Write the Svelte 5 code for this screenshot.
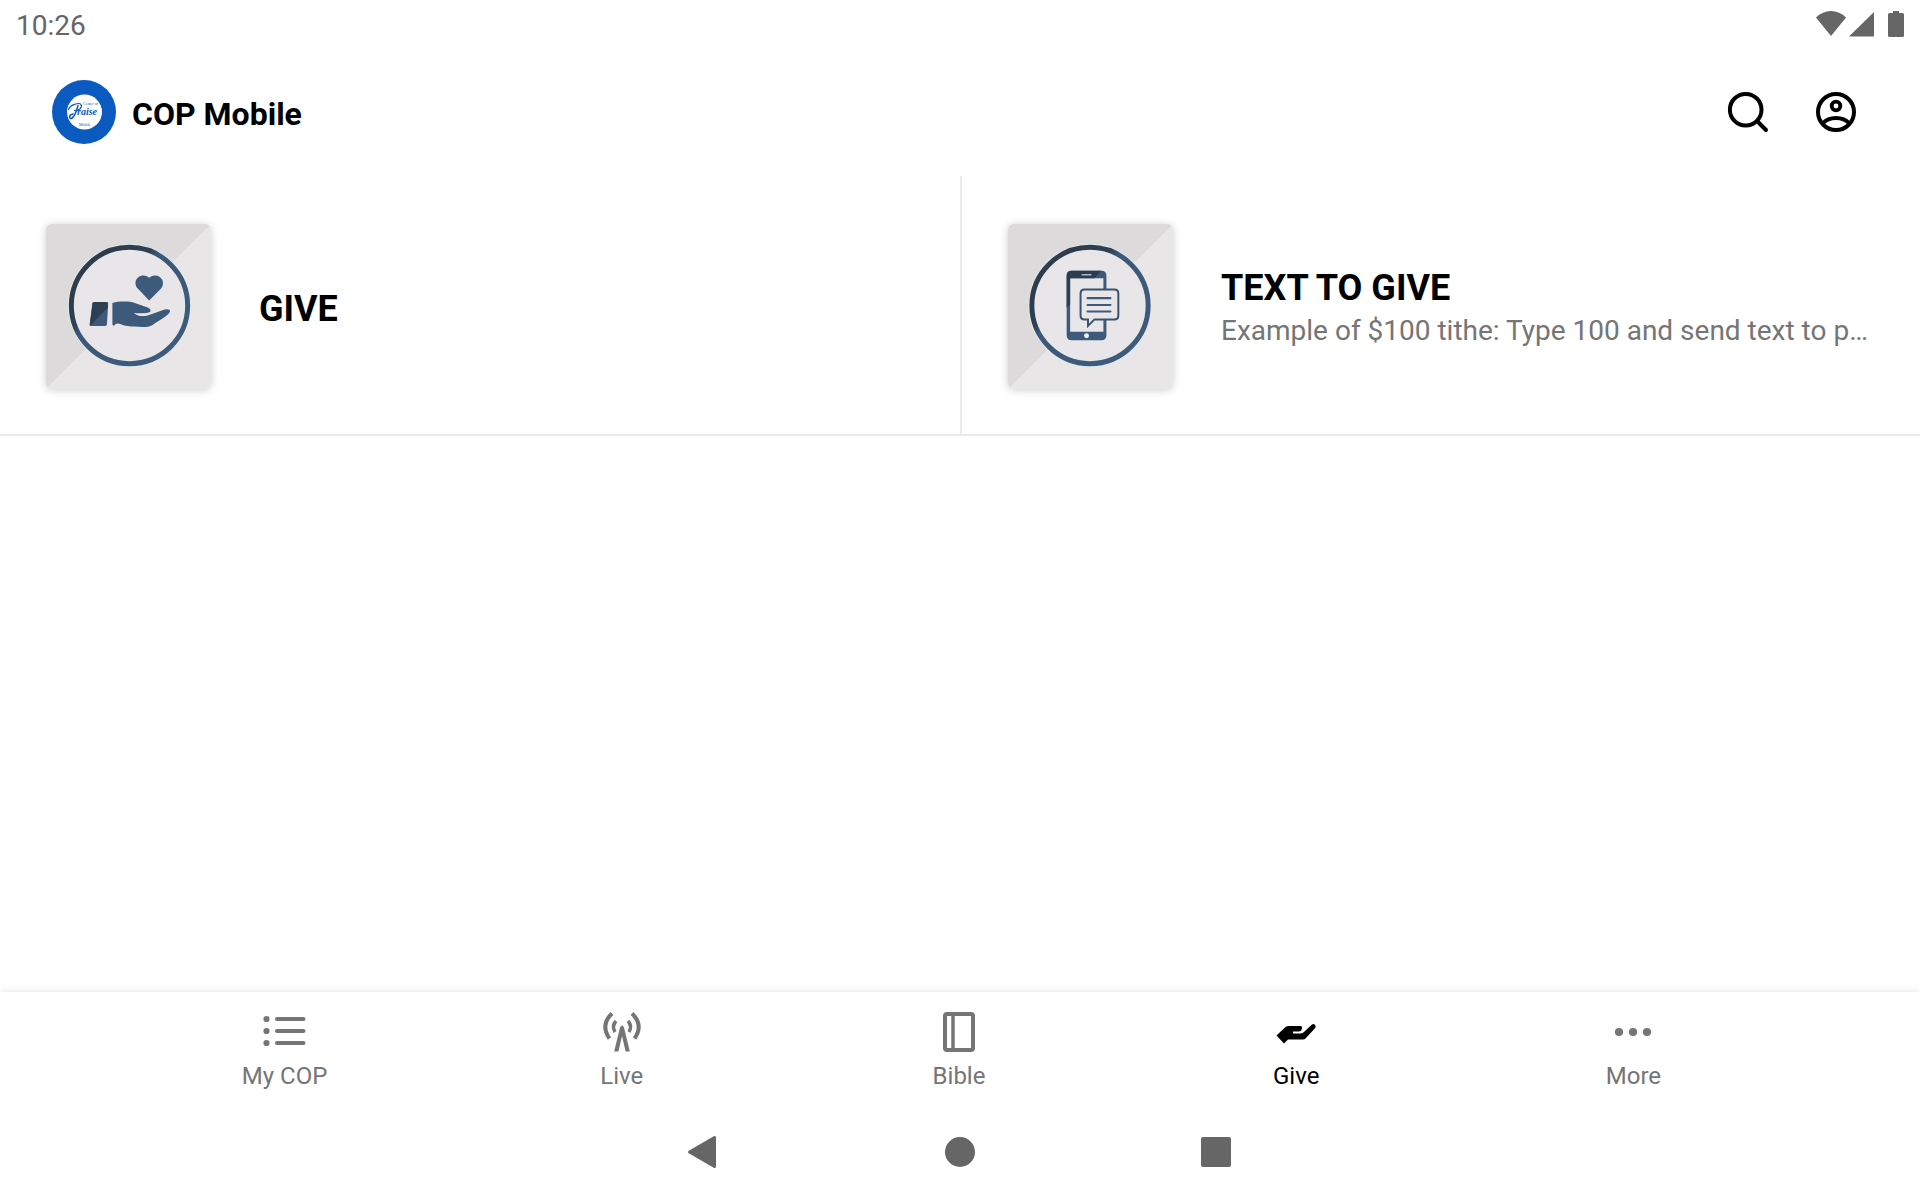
<script>
  const tabs = [
    { id: 'my', label: 'My COP' },
    { id: 'live', label: 'Live' },
    { id: 'bible', label: 'Bible' },
    { id: 'give', label: 'Give' },
    { id: 'more', label: 'More' }
  ];
  const cards = [
    { id: 'give', title: 'GIVE', text: '' },
    {
      id: 'text',
      title: 'TEXT TO GIVE',
      text: 'Example of $100 tithe: Type 100 and send text to p…'
    }
  ];
  let active = $state('give');
</script>

<div class="screen">
  <div class="status">
    <span>10:26</span>
    <svg width="88" height="28" viewBox="0 0 88 28" fill="#666" aria-hidden="true">
      <path d="M0 7.5Q6.500 1 15 1T30 7.500L15 26Z" />
      <path d="M58 2V26.500H33Z" />
      <path d="M77 1h6v2h3.500q1.500 0 1.500 1.500v21q0 1.500-1.500 1.500h-13q-1.500 0-1.500-1.500v-21q0-1.500 1.500-1.500H77Z" />
    </svg>
  </div>

  <header>
    <svg class="logo" viewBox="0 0 64 64" aria-hidden="true">
      <circle cx="32" cy="32" r="32" fill="#0a5abf" />
      <circle cx="32.500" cy="32" r="17.500" fill="#fff" />
      <g fill="none" stroke="#0a5abf" stroke-linecap="round">
        <path d="M16.500 29.500C18 25 27 22 29 24.500C31 28 26 31 22.500 30.500" stroke-width="1.200" />
        <path d="M26 25.500C24.500 31 22.500 37 19.500 38.500C17 39 16.500 35 21 34" stroke-width="1.500" />
      </g>
      <text class="script" x="25" y="35">raise</text>
      <text class="tiny" x="31" y="25">Center of</text>
      <text class="tiny" x="27" y="46">Mobile</text>
    </svg>
    <h1>COP Mobile</h1>
    <button class="icon" aria-label="Search">
      <svg viewBox="0 0 48 48" fill="none" stroke="#000" stroke-width="4" stroke-linecap="round">
        <circle cx="21.700" cy="21.700" r="15.800" />
        <path d="M33.500 33.500L42 42" />
      </svg>
    </button>
    <button class="icon" aria-label="Account">
      <svg viewBox="0 0 48 48" fill="none" stroke="#000" stroke-width="4">
        <circle cx="24" cy="24" r="18" />
        <circle cx="24" cy="18" r="4.300" stroke-width="3.800" />
        <path d="M10.500 35.500Q15.500 30 24 30T37.500 35.500" />
      </svg>
    </button>
  </header>

  <main>
    {#each cards as card}
      <a class="card" href="#{card.id}">
        <svg class="thumb" viewBox="0 0 166 166" aria-hidden="true">
          <defs>
            <linearGradient id="ring-{card.id}" x1="0" y1="0" x2="1" y2="1">
              <stop offset="0.2" stop-color="#2e3c4c" />
              <stop offset="0.35" stop-color="#2e4053" />
              <stop offset="0.4" stop-color="#3b5878" />
              <stop offset="1" stop-color="#3f5c7d" />
            </linearGradient>
          </defs>
          <rect width="166" height="166" fill="#e8e6e7" />
          <path d="M0 0H166L0 166Z" fill="#dcdadb" />
          {#if card.id === 'give'}
            <circle cx="84" cy="82" r="62" fill="#e1e9f0" />
            <circle cx="84" cy="82" r="58.500" fill="#e8e6e8" stroke="url(#ring-give)" stroke-width="5" />
            <g transform="translate(1.300 0)">
              <g fill="#3e5a7b">
                <path d="M102.500 77L91 65C84 56 95 47.500 102.500 54C110 47.500 121 56 114.500 65Z" />
                <path d="M65.500 79.500C72 77.500 83 77.500 88 79.500L101 84Q105 86 103.500 88.500Q99 90.500 87 89.500Q92 94 101 92L118 86Q123.500 85 123.500 88C122 92 114 96 108 100Q104 103.500 99 103.500C90 103.500 77 103 73.500 100.500Q69 99 67 102.500L65.500 101Z" />
                <path d="M45.500 79.500Q46 78.500 48 78.500H60Q61.500 78.500 61.300 80L60 101Q60 102.500 58 102.500H44Q42.500 102.500 42.700 101Z" />
              </g>
              <path d="M45.500 79.500Q46 78.500 48 78.500H60L61 84L43 102.500L42.700 101Z" fill="#2e3f53" />
            </g>
          {:else}
            <circle cx="82.500" cy="82" r="62" fill="#e1e9f0" />
            <circle cx="82.500" cy="82" r="58.500" fill="#e8e6e8" stroke="url(#ring-text)" stroke-width="5" />
            <path fill-rule="evenodd" fill="#3e5a7b" d="M64 47H94Q99 47 99 52V112Q99 117 94 117H64Q59 117 59 112V52Q59 47 64 47ZM62.500 54.500V108.500H96V54.500Z" />
            <path d="M59 84V52Q59 47 64 47H94L87 54.500H62.500V81Z" fill="#2e3c4f" />
            <path d="M74 51H84" stroke="#aab6c4" stroke-width="1.500" />
            <circle cx="79" cy="112.500" r="2.500" fill="#edf1f5" />
            <path d="M77 66H107Q111 66 111 70V92Q111 96 107 96H87L80.500 102.500V96H77Q73 96 73 92V70Q73 66 77 66Z" fill="#e8e6e8" stroke="#3b526f" stroke-width="2" />
            <path d="M80 74.500H103M80 81.500H103M80 88H103" stroke="#3e5a7b" stroke-width="2.200" stroke-linecap="round" />
          {/if}
        </svg>
        <span class="copy">
          <strong>{card.title}</strong>
          {#if card.text}<span class="sub">{card.text}</span>{/if}
        </span>
      </a>
    {/each}
  </main>

  <nav class="tabs" aria-label="Sections">
    {#each tabs as tab}
      <button class="tab" class:active={tab.id === active} onclick={() => (active = tab.id)}>
        <svg viewBox="0 0 48 48" fill="none" stroke="currentColor" stroke-width="4" aria-hidden="true">
          {#if tab.id === 'my'}
            <g stroke-linecap="round">
              <path d="M16 11H42.500M16 23H42.500M16 35H42.500" />
            </g>
            <g fill="currentColor" stroke="none">
              <circle cx="5.500" cy="11" r="3.100" /><circle cx="5.500" cy="23" r="3.100" /><circle cx="5.500" cy="35" r="3.100" />
            </g>
          {:else if tab.id === 'live'}
            <g fill="none">
              <path d="M14 5.500Q2 17 11.500 30.500M34 5.500Q46 17 36.500 30.500" />
              <path d="M18 13Q13.500 18 17 24M30 13Q34.500 18 31 24" stroke-width="3.500" />
            </g>
            <path d="M16.200 43.500L22 19.500Q24 15.500 26 19.500L31.800 43.500H27.600L24 28L20.400 43.500Z" fill="currentColor" stroke="none" />
          {:else if tab.id === 'bible'}
            <rect x="10" y="6" width="28" height="36" rx="2" />
            <path d="M18 6V42" stroke-width="3.500" />
          {:else if tab.id === 'give'}
            <path fill="currentColor" stroke="none" d="M4.500 27.500L13.500 19Q15 18 17 18H28.500Q30.500 18 30 20Q29.500 23.500 27 23.500H21V25.500H28.500Q31 25.500 32.500 23.500L40 16.500Q41.500 15.500 43 16.800Q44.500 18.500 43 20.200L34 30Q32.500 31.500 31 31.500H16L12 35.500Z" />
          {:else}
            <g fill="currentColor" stroke="none">
              <circle cx="10" cy="24" r="4.100" /><circle cx="24" cy="24" r="4.100" /><circle cx="38" cy="24" r="4.100" />
            </g>
          {/if}
        </svg>
        <span>{tab.label}</span>
      </button>
    {/each}
  </nav>

  <div class="system">
    <button aria-label="Back">
      <svg viewBox="0 0 48 48"><path d="M34.500 9.500V38.500L9.500 24Z" /></svg>
    </button>
    <button aria-label="Home"><svg viewBox="0 0 48 48"><circle cx="24" cy="24" r="15" /></svg></button>
    <button aria-label="Recent apps">
      <svg viewBox="0 0 48 48"><rect x="9" y="9" width="30" height="30" rx="2" /></svg>
    </button>
  </div>
</div>

<style>
  :global(body) {
    margin: 0;
    background: #fff;
  }
  .screen {
    display: flex;
    flex-direction: column;
    min-height: 100vh;
    font-family: Roboto, sans-serif;
    color: #000;
  }
  button {
    margin: 0;
    padding: 0;
    border: 0;
    background: none;
    font: inherit;
    color: inherit;
    cursor: pointer;
  }
  svg {
    display: block;
    flex: none;
  }
  .status {
    display: flex;
    align-items: center;
    justify-content: space-between;
    height: 48px;
    padding: 0 16px;
    font-size: 28px;
    color: #666;
  }
  .status span {
    padding-top: 2px;
  }
  header {
    display: flex;
    align-items: center;
    height: 128px;
    padding: 0 60px 0 52px;
  }
  .logo {
    width: 64px;
    height: 64px;
  }
  .script {
    font: italic bold 10px 'Liberation Serif', serif;
    fill: #0a5abf;
  }
  .tiny {
    font: 4px 'Liberation Serif', serif;
    fill: #0a5abf;
  }
  h1 {
    flex: 1;
    margin: 0 0 0 16px;
    padding-top: 4px;
    font-size: 32px;
    line-height: 40px;
    font-weight: 700;
  }
  .icon {
    margin-left: 40px;
  }
  .icon svg {
    width: 48px;
    height: 48px;
  }
  main {
    flex: 1;
    display: grid;
    grid-template-columns: 1fr 1fr;
    align-content: start;
  }
  .card {
    display: flex;
    align-items: center;
    gap: 48px;
    min-width: 0;
    padding: 48px 46px 45px;
    border-bottom: 2px solid #ebebeb;
    color: inherit;
    text-decoration: none;
  }
  .card + .card {
    border-left: 2px solid #ebebeb;
  }
  .thumb {
    width: 165px;
    height: 165px;
    border-radius: 6px;
    box-shadow: 0 1px 8px rgba(0, 0, 0, 0.2);
  }
  .copy {
    display: flex;
    flex-direction: column;
    min-width: 0;
    padding-top: 4px;
  }
  strong {
    font-size: 36px;
    line-height: 44px;
    font-weight: 700;
  }
  .sub {
    overflow: hidden;
    font-size: 28px;
    line-height: 42px;
    color: #757575;
    text-overflow: ellipsis;
    white-space: nowrap;
  }
  .tabs {
    display: flex;
    height: 112px;
    padding: 0 118px 0 116px;
    box-shadow: 0 -2px 6px rgba(0, 0, 0, 0.07);
    clip-path: inset(-10px 0 0 0);
  }
  .tab {
    flex: 1;
    display: flex;
    flex-direction: column;
    align-items: center;
    gap: 4px;
    padding-top: 16px;
    font-size: 24px;
    line-height: 32px;
    color: #757575;
  }
  .tab.active {
    color: #000;
  }
  .tab svg {
    width: 48px;
    height: 48px;
  }
  .system {
    display: flex;
    align-items: center;
    justify-content: center;
    gap: 208px;
    height: 96px;
  }
  .system svg {
    width: 48px;
    height: 48px;
    fill: #666;
  }
  .system path {
    stroke: #666;
    stroke-width: 3px;
    stroke-linejoin: round;
  }
</style>
